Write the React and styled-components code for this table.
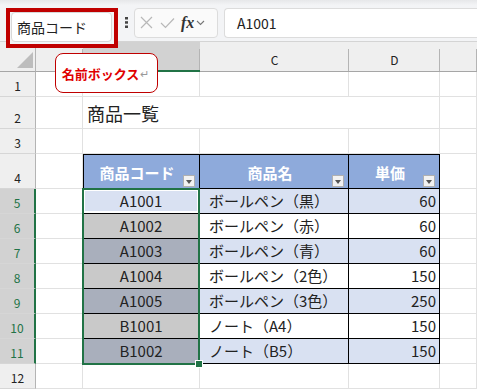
import React from "react"
import styled, { createGlobalStyle, css } from "styled-components"

const GlobalStyle = createGlobalStyle`
  html, body {
    margin: 0;
    padding: 0;
    background: #ffffff;
    font-family: "Noto Sans CJK JP", "Noto Sans", sans-serif;
    overflow: hidden;
  }
`

const GREEN = "#217346"
const GRID = "#e1e1e1"

const Page = styled.div`
  width: 477px;
  height: 390px;
  overflow: hidden;
`

// formula bar
const Bar = styled.div`
  height: 42px;
  box-sizing: border-box;
  display: flex;
  align-items: center;
  padding: 0 0 0 6px;
  background: linear-gradient(#e6e7e9 0, #f3f4f6 5px);
  border-bottom: 1px solid #d4d4d4;
`

// red annotation frame round the name box
const NameFrame = styled.div`
  position: relative;
  z-index: 4;
  align-self: flex-start;
  margin-top: 8px;
  border: 4px solid #c00000;
  padding: 0 2px 2px 1px;
  background: #f3f4f6;
`

const NameBox = styled.div`
  width: 101px;
  height: 30px;
  box-sizing: border-box;
  background: #fff;
  border: 1px solid #d8d8d8;
  border-radius: 4px;
  padding-left: 5px;
  display: flex;
  align-items: center;
  font-size: 14px;
  color: #222;
`

const Dots = styled.div`
  width: 16px;
  display: flex;
  justify-content: center;
  margin-top: 4px;
  svg { display: block; }
`

const FxBox = styled.div`
  width: 84px;
  height: 30px;
  box-sizing: border-box;
  margin-top: 4px;
  background: #fafafa;
  border: 1px solid #dcdcdc;
  border-radius: 4px;
  display: flex;
  align-items: center;
  padding-left: 5px;
  gap: 7px;
  svg { display: block; }
`

const Fx = styled.span`
  font-family: "Liberation Serif", "DejaVu Serif", serif;
  font-style: italic;
  font-weight: bold;
  font-size: 16px;
  color: #333;
  margin-left: -1px;
  margin-right: -5px;
`

const Formula = styled.div`
  flex: 1;
  height: 30px;
  box-sizing: border-box;
  margin: 4px 0 0 6px;
  background: #fff;
  border: 1px solid #dcdcdc;
  border-right: none;
  border-radius: 4px 0 0 4px;
  display: flex;
  align-items: center;
  padding-left: 12px;
  font-size: 14px;
  color: #222;
`

// sheet grid
const Sheet = styled.div`
  position: relative;
  display: grid;
  grid-template-columns: 36px 47px 117px 149px 91px 1fr;
  grid-template-rows: 30px 25px 32px 25px 35px repeat(8, 25px);
`

const ColHead = styled.div`
  position: relative;
  box-sizing: border-box;
  background: ${p => (p.$sel ? "#d2d2d2" : "#efefef")};
  border-bottom: ${p => (p.$sel ? `2px solid ${GREEN}` : "1px solid #a6a6a6")};
  display: flex;
  align-items: center;
  justify-content: center;
  padding-top: 6px;
  font-size: 12px;
  color: #222;
  &::after {
    content: "";
    position: absolute;
    right: 0;
    top: 7px;
    bottom: 0;
    width: 1px;
    background: #b4b4b4;
  }
`

const Corner = styled.div`
  position: relative;
  box-sizing: border-box;
  background: #efefef;
  border-bottom: 1px solid #a6a6a6;
  border-right: 1px solid #b4b4b4;
  svg { position: absolute; right: 2px; bottom: 3px; }
`

const RowHead = styled.div`
  grid-column: 1;
  grid-row: ${p => p.$row};
  box-sizing: border-box;
  background: ${p => (p.$sel ? "#d2d2d2" : "#efefef")};
  color: ${p => (p.$sel ? GREEN : "#222")};
  border-right: ${p => (p.$sel ? `2px solid ${GREEN}` : "1px solid #b4b4b4")};
  border-bottom: 1px solid #d6d6d6;
  display: flex;
  align-items: flex-end;
  justify-content: center;
  padding-bottom: 3px;
  font-size: 12px;
  line-height: 14px;
`

const Cell = styled.div`
  grid-row: ${p => p.$row};
  grid-column: ${p => p.$col};
  box-sizing: border-box;
  border-right: 1px solid ${GRID};
  border-bottom: 1px solid ${GRID};
  background: #fff;
`

const Title = styled(Cell)`
  grid-column: 3 / span 2;
  display: flex;
  align-items: flex-end;
  padding: 0 0 3px 4px;
  font-size: 18px;
  line-height: 24px;
  color: #222;
  border-right: none;
`

const HeadCell = styled.div`
  grid-row: 5;
  grid-column: ${p => p.$col};
  position: relative;
  box-sizing: border-box;
  background: #8eaadb;
  border-right: 1px solid #000;
  border-bottom: 1px solid #000;
  box-shadow: inset 0 1px #000 ${p => (p.$first ? ", inset 1px 0 #000" : "")};
  display: flex;
  align-items: center;
  justify-content: center;
  padding: 2px 8px 0 0;
  font-size: 15px;
  font-weight: bold;
  color: #fff;
`

const FilterBtn = styled.span`
  position: absolute;
  right: 4px;
  bottom: 1px;
  width: 12px;
  height: 12px;
  box-sizing: border-box;
  background: #f2f2f2;
  border: 1px solid #b0b0b0;
  display: flex;
  align-items: center;
  justify-content: center;
  &::before {
    content: "";
    border-left: 3.5px solid transparent;
    border-right: 3.5px solid transparent;
    border-top: 4px solid #555;
    margin-top: 1px;
  }
`

const DataCell = styled.div`
  grid-column: ${p => p.$col};
  grid-row: ${p => p.$row};
  box-sizing: border-box;
  border-right: 1px solid #000;
  border-bottom: 1px solid #000;
  background: ${p => p.$bg};
  display: flex;
  align-items: flex-end;
  padding-bottom: 2px;
  font-size: 15px;
  line-height: 20px;
  color: #222;
  white-space: nowrap;
  ${p =>
    p.$align === "center" &&
    css`
      justify-content: center;
    `}
  ${p =>
    p.$align === "right" &&
    css`
      justify-content: flex-end;
      padding-right: 3px;
    `}
  ${p =>
    p.$align === "left" &&
    css`
      padding-left: 9px;
    `}
  ${p => p.$first && css`box-shadow: inset 1px 0 #000;`}
  ${p => p.$active && css`box-shadow: inset 1px 0 #000, inset 0 0 0 2px #fff;`}
`

const Selection = styled.div`
  grid-column: 3;
  grid-row: 6 / 13;
  position: relative;
  z-index: 3;
  margin: -1px 0 -1px -1px;
  border: 2px solid ${GREEN};
  pointer-events: none;
`

const FillHandle = styled.span`
  position: absolute;
  right: -5px;
  bottom: -5px;
  width: 6px;
  height: 6px;
  background: ${GREEN};
  border: 1px solid #fff;
`

const Callout = styled.div`
  position: absolute;
  z-index: 5;
  left: 55px;
  top: 11px;
  width: 103px;
  height: 40px;
  box-sizing: border-box;
  background: #fff;
  border: 1px solid #c00000;
  border-radius: 8px;
  display: flex;
  align-items: center;
  justify-content: center;
  font-size: 13px;
  font-weight: bold;
  color: #e00000;
  padding-right: 2px;
`

const Return = styled.span`
  font-size: 11px;
  font-weight: normal;
  color: #999;
  margin-left: 1px;
`

const products = [
  ["A1001", "ボールペン（黒）", 60],
  ["A1002", "ボールペン（赤）", 60],
  ["A1003", "ボールペン（青）", 60],
  ["A1004", "ボールペン（2色）", 150],
  ["A1005", "ボールペン（3色）", 250],
  ["B1001", "ノート（A4）", 150],
  ["B1002", "ノート（B5）", 150],
]

const BLUE = "#d9e1f2"

const emptyRow = (row, cols = [2, 3, 4, 5, 6]) =>
  cols.map(c => <Cell key={`${row}-${c}`} $row={row} $col={c} />)

function App() {
  return (
    <Page>
      <GlobalStyle />
      <Bar>
        <NameFrame>
          <NameBox>商品コード</NameBox>
        </NameFrame>
        <Dots>
          <svg width="3" height="11" viewBox="0 0 3 11">
            <rect x="0" y="0" width="3" height="2.5" fill="#444" />
            <rect x="0" y="4.2" width="3" height="2.5" fill="#444" />
            <rect x="0" y="8.5" width="3" height="2.5" fill="#444" />
          </svg>
        </Dots>
        <FxBox>
          <svg width="13" height="13" viewBox="0 0 13 13">
            <path d="M1 1L12 12M12 1L1 12" stroke="#b8b8b8" strokeWidth="1.2" fill="none" />
          </svg>
          <svg width="15" height="12" viewBox="0 0 15 12">
            <path d="M1 6L5.5 10.5L14 1.5" stroke="#b8b8b8" strokeWidth="1.2" fill="none" />
          </svg>
          <Fx>fx</Fx>
          <svg width="9" height="6" viewBox="0 0 9 6">
            <path d="M1 1L4.5 4.5L8 1" stroke="#777" strokeWidth="1.1" fill="none" />
          </svg>
        </FxBox>
        <Formula>A1001</Formula>
      </Bar>
      <Sheet>
        <Corner>
          <svg width="16" height="16" viewBox="0 0 16 16">
            <path d="M16 0L16 16L0 16Z" fill="#bdbdbd" />
          </svg>
        </Corner>
        <ColHead>A</ColHead>
        <ColHead $sel>B</ColHead>
        <ColHead>C</ColHead>
        <ColHead>D</ColHead>
        <ColHead />

        <RowHead $row={2}>1</RowHead>
        {emptyRow(2)}

        <RowHead $row={3}>2</RowHead>
        <Cell $row={3} $col={2} />
        <Title $row={3}>商品一覧</Title>
        {emptyRow(3, [5, 6])}

        <RowHead $row={4}>3</RowHead>
        {emptyRow(4)}

        <RowHead $row={5}>4</RowHead>
        <Cell $row={5} $col={2} />
        {["商品コード", "商品名", "単価"].map((h, i) => (
          <HeadCell key={h} $col={i + 3} $first={i === 0}>
            {h}
            <FilterBtn />
          </HeadCell>
        ))}
        <Cell $row={5} $col={6} />

        {products.map(([code, name, price], i) => {
          const banded = i % 2 === 0
          const bg = banded ? BLUE : "#fff"
          const selBg = i === 0 ? BLUE : banded ? "#a9afbc" : "#c9c9c9"
          const row = i + 6
          return (
            <React.Fragment key={code}>
              <RowHead $row={row} $sel>{i + 5}</RowHead>
              <Cell $row={row} $col={2} />
              <DataCell $row={row} $col={3} $bg={selBg} $align="center" $first $active={i === 0}>
                {code}
              </DataCell>
              <DataCell $row={row} $col={4} $bg={bg} $align="left">
                {name}
              </DataCell>
              <DataCell $row={row} $col={5} $bg={bg} $align="right">
                {price}
              </DataCell>
              <Cell $row={row} $col={6} />
            </React.Fragment>
          )
        })}

        <RowHead $row={13}>12</RowHead>
        {emptyRow(13)}

        <Selection>
          <FillHandle />
        </Selection>
        <Callout>
          名前ボックス<Return>↵</Return>
        </Callout>
      </Sheet>
    </Page>
  )
}

export default App
